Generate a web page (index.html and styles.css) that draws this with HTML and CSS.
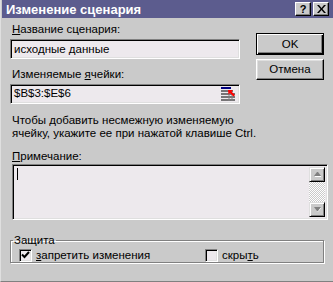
FILE: index.html
```html
<!DOCTYPE html>
<html lang="ru">
<head>
    <meta charset="UTF-8">
    <title>Изменение сценария</title>
    <link rel="stylesheet" href="styles.css">
</head>
<body>
    <div class="dialog">
        <div class="titlebar">
            <span class="title">Изменение сценария</span>
            <div class="caption-btns">
                <span class="cap-btn help">?</span>
                <span class="cap-btn">
                    <svg width="9" height="8" viewBox="0 0 9 8">
                        <path d="M0 0h2l2.5 3 2.5-3h2l-3.5 4 3.5 4h-2l-2.5-3-2.5 3h-2l3.5-4z" fill="#000"/>
                    </svg>
                </span>
            </div>
        </div>

        <div class="content">
            <div class="top">
                <div class="fields">
                    <div class="label"><u>Н</u>азвание сценария:</div>
                    <div class="edit">исходные данные</div>
                    <div class="label second">Изменяемые <u>я</u>чейки:</div>
                    <div class="edit ref">
                        <span>$B$3:$E$6</span>
                        <svg class="ref-icon" width="16" height="15" viewBox="0 0 16 15">
                            <rect x="1" y="1" width="10" height="2" fill="#000080"/>
                            <path d="M1 5h12M1 8h14M1 11h14M1 14h14" stroke="#000" stroke-width="1"/>
                            <path d="M9 7v8M12 7v8" stroke="#808080" stroke-width="1"/>
                            <path d="M8 4l5 0-1.5 1.5 3.5 3.5-1.5 1.5-3.5-3.5-1.5 1.5z" fill="#f00"/>
                        </svg>
                    </div>
                </div>
                <div class="buttons">
                    <div class="btn default">OK</div>
                    <div class="btn">Отмена</div>
                </div>
            </div>

            <p class="hint">Чтобы добавить несмежную изменяемую<br>ячейку, укажите ее при нажатой клавише Ctrl.</p>

            <div class="label note"><u>П</u>римечание:</div>
            <div class="memo">
                <div class="memo-text"><span class="caret"></span></div>
                <div class="scrollbar">
                    <div class="sb-btn">
                        <svg width="7" height="5" viewBox="0 0 7 5">
                            <path d="M1 4.5h6" stroke="#fff"/>
                            <path d="M3 0h1l3 4h-7z" fill="#808080"/>
                        </svg>
                    </div>
                    <div class="sb-track"></div>
                    <div class="sb-btn">
                        <svg width="7" height="5" viewBox="0 0 7 5">
                            <path d="M4 4.5l3-4" stroke="#fff"/>
                            <path d="M0 0h7l-3 4h-1z" fill="#808080"/>
                        </svg>
                    </div>
                </div>
            </div>

            <fieldset class="group">
                <legend>Защита</legend>
                <div class="checks">
                    <div class="check">
                        <span class="box">
                            <svg width="9" height="9" viewBox="0 0 9 9">
                                <path d="M1 3.5l2.5 2.5 4.5-5" stroke="#000" stroke-width="2" fill="none"/>
                            </svg>
                        </span>
                        <span><u>з</u>апретить изменения</span>
                    </div>
                    <div class="check">
                        <span class="box"></span>
                        <span>скры<u>т</u>ь</span>
                    </div>
                </div>
            </fieldset>
        </div>
    </div>
</body>
</html>
```

FILE: styles.css
```css
* {
    margin: 0;
    padding: 0;
    box-sizing: border-box;
}

body {
    background: #cacaca;
    font-family: "Liberation Sans", Arial, sans-serif;
    font-size: 11.5px;
    line-height: 13px;
    color: #000;
}

.dialog {
    width: 333px;
    height: 282px;
    border-left: 1px solid #dfdfdf;
    border-bottom: 1px solid #808080;
    padding: 0 4px 0 1px;
}

.titlebar {
    height: 18px;
    background: #5c5c8e;
    display: flex;
    align-items: center;
    justify-content: space-between;
    padding: 0 4px 0 4px;
    margin-right: -4px;
}

.title {
    color: #fff;
    font-weight: bold;
    font-size: 13px;
}

.caption-btns {
    display: flex;
    gap: 2px;
}

.cap-btn {
    width: 16px;
    height: 14px;
    background: #cacaca;
    border: 1px solid;
    border-color: #fff #000 #000 #fff;
    box-shadow: inset -1px -1px #808080;
    display: flex;
    align-items: center;
    justify-content: center;
    font-weight: bold;
    font-size: 11px;
}

.content {
    padding: 5px 0 0 8px;
}

.top {
    display: flex;
    gap: 16px;
}

.fields {
    width: 230px;
}

.label {
    padding-left: 2px;
}

.label.second {
    margin-top: 9px;
}

.edit {
    height: 20px;
    margin-top: 3px;
    background: #ede9ed;
    border: 1px solid;
    border-color: #808080 #fff #fff #808080;
    box-shadow: inset 1px 1px #000, inset -1px -1px #dfdfdf;
    padding: 3px 3px 0 3px;
    display: flex;
    justify-content: space-between;
}

.edit.ref {
    padding-top: 2px;
}

.ref-icon {
    margin-top: -1px;
}

.buttons {
    display: flex;
    flex-direction: column;
    gap: 4px;
    padding-top: 10px;
}

.btn {
    width: 68px;
    height: 21px;
    border: 1px solid;
    border-color: #fff #000 #000 #fff;
    box-shadow: inset -1px -1px #808080, inset 1px 1px #dfdfdf;
    display: flex;
    align-items: center;
    justify-content: center;
}

.btn.default {
    height: 22px;
    border: 1px solid #000;
    box-shadow: inset 1px 1px #fff, inset -1px -1px #000, inset -2px -2px #808080;
}

.hint {
    margin-top: 10px;
    padding-left: 2px;
}

.label.note {
    margin-top: 10px;
}

.memo {
    margin: 1px 0 0 2px;
    width: 316px;
    height: 56px;
    background: #ede9ed;
    border: 1px solid;
    border-color: #808080 #fff #fff #808080;
    box-shadow: inset 1px 1px #000, inset -1px -1px #dfdfdf;
    padding: 2px 2px 2px 2px;
    display: flex;
    justify-content: space-between;
}

.memo-text {
    padding: 1px 0 0 2px;
}

.caret {
    display: block;
    width: 1px;
    height: 12px;
    background: #000;
}

.scrollbar {
    width: 16px;
    display: flex;
    flex-direction: column;
}

.sb-btn {
    height: 15px;
    background: #cacaca;
    border: 1px solid;
    border-color: #dfdfdf #000 #000 #dfdfdf;
    box-shadow: inset 1px 1px #fff, inset -1px -1px #808080;
    display: flex;
    align-items: center;
    justify-content: center;
}

.sb-track {
    flex: 1;
    background-image: conic-gradient(#fff 25%, #cacaca 0 50%, #fff 0 75%, #cacaca 0);
    background-size: 2px 2px;
}

.group {
    margin: 14px 0 0 0;
    width: 314px;
    height: 29px;
    border: 1px solid #808080;
    box-shadow: 1px 1px #fff, inset 1px 1px #fff;
    padding: 0 0 0 8px;
}

.group legend {
    padding: 0 1px;
    margin-left: -6px;
    line-height: 13px;
}

.checks {
    display: flex;
    padding-top: 2px;
}

.check {
    display: flex;
    align-items: center;
    gap: 4px;
}

.check:first-child {
    width: 186px;
}

.box {
    width: 13px;
    height: 13px;
    background: #ede9ed;
    border: 1px solid;
    border-color: #808080 #fff #fff #808080;
    box-shadow: inset 1px 1px #000, inset -1px -1px #dfdfdf;
    display: flex;
    align-items: center;
    justify-content: center;
}
```
